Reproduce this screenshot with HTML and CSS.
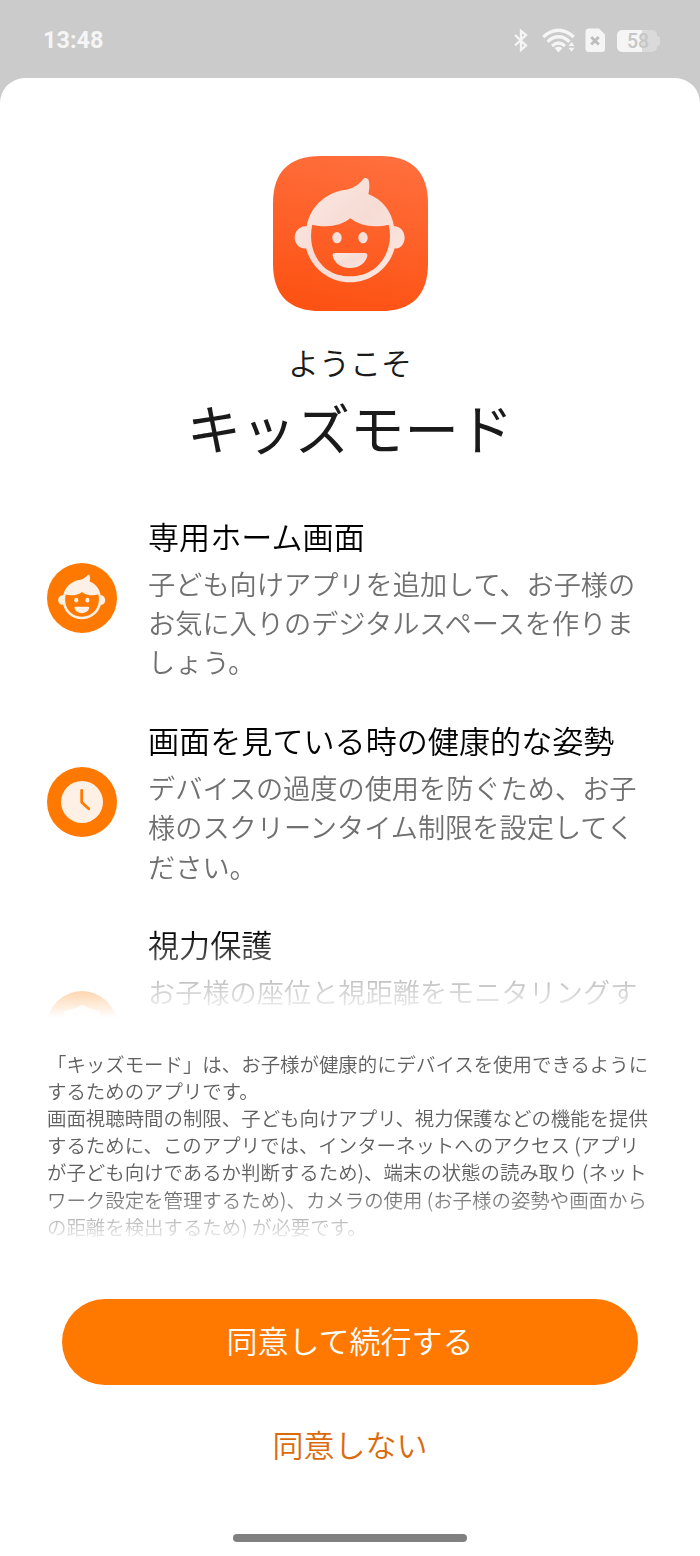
FILE: index.html
```
<!DOCTYPE html>
<html lang="ja">
<head>
  <meta charset="UTF-8">
  <meta name="viewport" content="width=device-width, initial-scale=1.0">
  <title>キッズモード</title>
  <link rel="stylesheet" href="styles.css">
</head>
<body>
  <header class="status-bar">
    <span class="clock">13:48</span>
    <div class="status-icons">
      <svg class="bluetooth" width="16" height="26" viewBox="0 0 16 26">
        <path d="M2 8 L13 18.5 L8 23 V4 L13 8 L2 18.5" fill="none" stroke="#f5f5f5" stroke-width="2.3"/>
      </svg>
      <svg class="wifi" width="34" height="26" viewBox="0 0 34 26">
        <g fill="none" stroke="#f5f5f5" stroke-width="3.2">
          <path d="M1.2 10 Q16.5 -3.5 31.8 10"/>
          <path d="M5.5 14.7 Q16.5 4.8 27.5 14.7"/>
          <path d="M10 19 Q16.5 13 23 19"/>
        </g>
        <path d="M12.5 21 Q16.5 17.8 20.5 21 L16.5 25.5 Z" fill="#f5f5f5"/>
        <path d="M26.5 19 L29.5 15 L32.5 19 Z M26.5 20.7 H32.5 L29.5 24.700 Z" fill="#f5f5f5"/>
      </svg>
      <svg class="sim" width="21" height="26" viewBox="0 0 21 26">
        <path d="M4 1.5 H14 L20 7.5 V21.5 Q20 25 17 25 H4 Q0.5 25 0.5 21.5 V5 Q0.5 1.5 4 1.5 Z" fill="#f5f5f5"/>
        <path d="M6.2 10 L13.8 17.5 M13.8 10 L6.2 17.5" stroke="#bdbdbd" stroke-width="2.8"/>
      </svg>
      <div class="battery"><span class="battery-level">58</span></div>
    </div>
  </header>

  <main class="sheet">
    <svg class="app-icon" viewBox="38 32 465 465">
      <defs>
        <linearGradient id="appBg" x1="0.6" y1="0" x2="0.4" y2="1">
          <stop offset="0" stop-color="#ff6e3c"/>
          <stop offset="1" stop-color="#fd5213"/>
        </linearGradient>
        <linearGradient id="faceFill" x1="0" y1="0" x2="1" y2="1">
          <stop offset="0" stop-color="#fbe9e3"/>
          <stop offset="0.5" stop-color="#f6dcd4"/>
          <stop offset="1" stop-color="#fce8e1"/>
        </linearGradient>
        <g id="kid">
          <path fill-rule="evenodd" d="M139 243 C149 187 192 146 247 135 C276 130 291 122 307 103 C315 94 325 99 326 109 C328 122 327 136 324 146 C367 163 394 198 401 243 C417 241 433 257 433 277 C433 297 418 312 403 309 C386 370 330 411 269 411 C208 411 154 370 137 309 C121 312 103 297 103 277 C103 257 120 240 139 243 Z M156 238 C139 310 178 393 269 393 C360 393 403 310 385 238 C340 248 299 242 270 219 C242 242 200 248 156 238 Z"/>
          <ellipse cx="230" cy="277" rx="14" ry="17"/>
          <ellipse cx="308" cy="277" rx="14" ry="17"/>
          <path d="M225 323 H313 Q322 323 321 332 C315 355 295 368 269 368 C243 368 223 355 217 332 Q216 323 225 323 Z"/>
        </g>
      </defs>
      <path d="M38 174 C38 80 86 32 180 32 H361 C455 32 503 80 503 174 V355 C503 449 455 497 361 497 H180 C86 497 38 449 38 355 Z" fill="url(#appBg)"/>
      <use href="#kid" fill="url(#faceFill)"/>
    </svg>
    <p class="welcome">ようこそ</p>
    <h1 class="title">キッズモード</h1>

    <section class="features">
      <div class="feature">
        <svg class="feature-icon" viewBox="0 0 70 70">
          <circle cx="35" cy="35" r="35" fill="#ff7900"/>
          <use href="#kid" fill="#fff0e5" transform="translate(-3.5 -2.3) scale(0.1425)"/>
        </svg>
        <div class="feature-text">
          <h2>専用ホーム画面</h2>
          <p>子ども向けアプリを追加して、お子様の<br>お気に入りのデジタルスペースを作りま<br>しょう。</p>
        </div>
      </div>
      <div class="feature">
        <svg class="feature-icon" viewBox="0 0 70 70">
          <circle cx="35" cy="35" r="35" fill="#ff7900"/>
          <circle cx="35" cy="35" r="21" fill="#fff0e5"/>
          <path d="M34.7 23.5 V35.2 L41.7 41.7" fill="none" stroke="#ff7900" stroke-width="2.8" stroke-linecap="round" stroke-linejoin="round"/>
        </svg>
        <div class="feature-text">
          <h2>画面を見ている時の健康的な姿勢</h2>
          <p>デバイスの過度の使用を防ぐため、お子<br>様のスクリーンタイム制限を設定してく<br>ださい。</p>
        </div>
      </div>
      <div class="feature">
        <svg class="feature-icon last" viewBox="0 0 70 70">
          <circle cx="35" cy="35" r="35" fill="#ff7900"/>
          <path d="M35 14 C29 17 23 19 17 20 V34 C17 45 24 52 35 57 C46 52 53 45 53 34 V20 C47 19 41 17 35 14 Z" fill="#fff0e5"/>
        </svg>
        <div class="feature-text">
          <h2>視力保護</h2>
          <p>お子様の座位と視距離をモニタリングす</p>
        </div>
      </div>
    </section>

    <p class="legal">「キッズモード」は、お子様が健康的にデバイスを使用できるように<br>するためのアプリです。<br>画面視聴時間の制限、子ども向けアプリ、視力保護などの機能を提供<br>するために、このアプリでは、インターネットへのアクセス (アプリ<br>が子ども向けであるか判断するため)、端末の状態の読み取り (ネット<br>ワーク設定を管理するため)、カメラの使用 (お子様の姿勢や画面から<br>の距離を検出するため) が必要です。</p>

    <div class="actions">
      <button class="btn-agree">同意して続行する</button>
      <button class="btn-decline">同意しない</button>
    </div>
    <div class="home-bar"></div>
  </main>
</body>
</html>
```
FILE: styles.css
```
* {
  box-sizing: border-box;
  margin: 0;
  padding: 0;
}
body {
  width: 700px;
  height: 1556px;
  overflow: hidden;
  background-color: #cbcbcb;
  font-family: "Noto Sans CJK JP", sans-serif;
  font-weight: 350;
  color: #1a1a1a;
}
.status-bar {
  display: flex;
  justify-content: space-between;
  height: 78px;
  padding: 27px 40px 0 43px;
}
.clock {
  font: 700 23.5px/27px Roboto, sans-serif;
  color: #f5f5f5;
}
.status-icons {
  display: flex;
  height: 26px;
}
.wifi {
  margin-left: 13px;
}
.sim {
  margin-left: 9px;
}
.battery {
  display: flex;
  align-items: center;
  width: 43px;
  height: 22px;
  margin: 3px 0 0 11px;
}
.battery::after {
  content: "";
  width: 3px;
  height: 10px;
  border-radius: 0 3px 3px 0;
  background: #dadada;
}
.battery-level {
  width: 40px;
  height: 22px;
  padding-left: 10px;
  border-radius: 5px;
  background: linear-gradient(to right, #f5f5f5 25px, #dadada 25px);
  font: 500 19.5px/23px Roboto, sans-serif;
  color: #c6c6c6;
}
.sheet {
  display: flex;
  flex-direction: column;
  align-items: center;
  height: 1478px;
  padding-top: 77.5px;
  border-radius: 25px 25px 0 0;
  background: #fff;
}
.app-icon {
  flex: none;
  width: 155px;
  height: 155px;
}
.welcome {
  margin-top: 31px;
  font-size: 31px;
  line-height: 40px;
}
.title {
  margin-top: 7px;
  font-size: 54.4px;
  line-height: 76px;
  font-weight: 400;
}
.features {
  width: 100%;
  height: 508px;
  margin-top: 49px;
  padding: 0 47px;
  overflow: hidden;
  -webkit-mask-image: linear-gradient(to bottom, #000 417px, transparent 504px);
  mask-image: linear-gradient(to bottom, #000 417px, transparent 504px);
}
.feature {
  display: flex;
  height: 204.3px;
}
.feature-icon {
  flex: none;
  width: 70px;
  height: 70px;
  margin: 49.5px 31px 0 0;
}
.feature-icon.last {
  margin-top: 69px;
}
.feature-text h2 {
  font-size: 31.1px;
  line-height: 44px;
  font-weight: 350;
  color: #000;
  white-space: nowrap;
}
.feature-text p {
  margin-top: 6px;
  font-size: 27.2px;
  line-height: 39.4px;
  color: #707070;
  white-space: nowrap;
}
.legal {
  width: 606px;
  margin-top: 28px;
  font-size: 19.43px;
  line-height: 27.2px;
  color: #606060;
  white-space: nowrap;
  -webkit-mask-image: linear-gradient(to bottom, #000 140px, transparent 194px);
  mask-image: linear-gradient(to bottom, #000 140px, transparent 194px);
}
.actions {
  display: flex;
  flex-direction: column;
  align-items: center;
  margin-top: 59px;
}
.actions button {
  border: none;
  font-family: inherit;
  font-size: 31px;
  font-weight: 350;
}
.btn-agree {
  width: 576px;
  height: 86px;
  padding-bottom: 4px;
  border-radius: 43px;
  background: #ff7900;
  color: #fff;
}
.btn-decline {
  height: 60px;
  margin-top: 31px;
  padding-bottom: 4px;
  background: none;
  color: #da6b0c;
}
.home-bar {
  width: 234px;
  height: 8px;
  margin-top: 58px;
  border-radius: 4px;
  background: #808080;
}
```
